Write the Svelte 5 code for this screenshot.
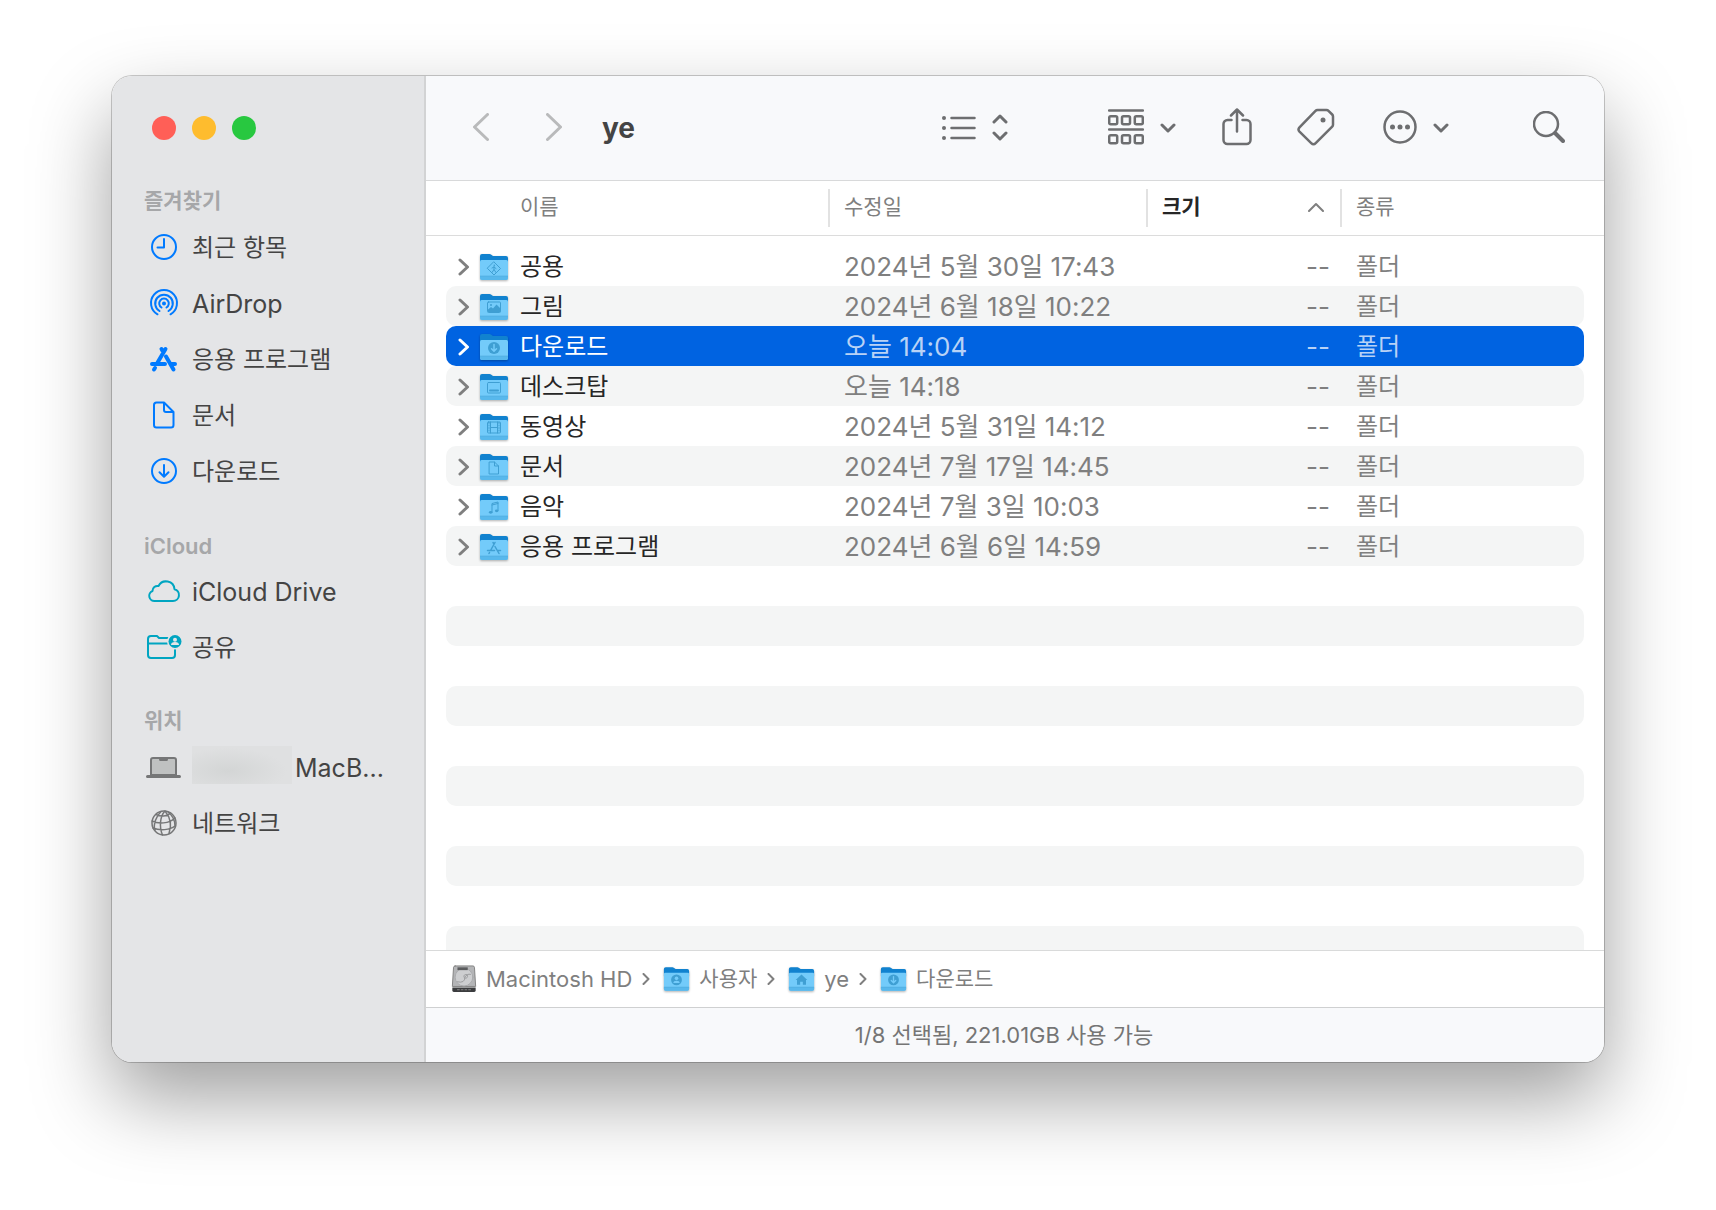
<script lang="ts">
	type Place = { icon: string; label: string; masked?: boolean };
	type Section = { title: string; tone: string; places: Place[] };
	type Folder = { name: string; glyph: string; modified: string };

	const sections: Section[] = [
		{
			title: '즐겨찾기',
			tone: 'blue',
			places: [
				{ icon: 'clock', label: '최근 항목' },
				{ icon: 'airdrop', label: 'AirDrop' },
				{ icon: 'apps', label: '응용 프로그램' },
				{ icon: 'document', label: '문서' },
				{ icon: 'download', label: '다운로드' }
			]
		},
		{
			title: 'iCloud',
			tone: 'teal',
			places: [
				{ icon: 'cloud', label: 'iCloud Drive' },
				{ icon: 'shared', label: '공유' }
			]
		},
		{
			title: '위치',
			tone: 'gray',
			places: [
				{ icon: 'laptop', label: 'MacB...', masked: true },
				{ icon: 'globe', label: '네트워크' }
			]
		}
	];

	const folders: Folder[] = [
		{ name: '공용', glyph: 'public', modified: '2024년 5월 30일 17:43' },
		{ name: '그림', glyph: 'picture', modified: '2024년 6월 18일 10:22' },
		{ name: '다운로드', glyph: 'download', modified: '오늘 14:04' },
		{ name: '데스크탑', glyph: 'desktop', modified: '오늘 14:18' },
		{ name: '동영상', glyph: 'movie', modified: '2024년 5월 31일 14:12' },
		{ name: '문서', glyph: 'document', modified: '2024년 7월 17일 14:45' },
		{ name: '음악', glyph: 'music', modified: '2024년 7월 3일 10:03' },
		{ name: '응용 프로그램', glyph: 'apps', modified: '2024년 6월 6일 14:59' }
	];

	const path = [
		{ label: 'Macintosh HD', glyph: 'disk' },
		{ label: '사용자', glyph: 'user' },
		{ label: 'ye', glyph: 'home' },
		{ label: '다운로드', glyph: 'download' }
	];

	// empty striped rows that fill the list below the last folder
	const blanks = Array.from({ length: 30 }, (_, i) => i);

	let selected = $state('다운로드');

	// latin labels run a size larger than hangul ones
	const isLatin = (text: string) => /^[\x20-\x7e]+$/.test(text);
</script>

{#snippet placeIcon(name: string)}
	<svg class="place-icon" viewBox="0 0 36 36" width="36" height="36" aria-hidden="true">
		{#if name === 'clock'}
			<circle cx="18" cy="18" r="12" />
			<path d="M18 10v8.500h-6.500" />
		{:else if name === 'airdrop'}
			<circle class="solid" cx="18" cy="18.500" r="2" />
			<path d="M15.500 22.500a4.800 4.800 0 1 1 5 0M13.500 26a8.800 8.800 0 1 1 9 0M11.500 29.300a13 13 0 1 1 13 0" />
		{:else if name === 'apps'}
			<path class="thick" d="M15.500 8l2 3.500M19.500 8l-8.500 14.500M6 23h13M25 23h4M20 15.500l7.500 13M9 27l-1 1.500" />
		{:else if name === 'document'}
			<path d="M10.500 5.500h7.500l9.500 9.500v13a2.500 2.500 0 0 1-2.500 2.500h-14.500a2.500 2.500 0 0 1-2.500-2.500v-20a2.500 2.500 0 0 1 2.500-2.500zM18 6v7a2 2 0 0 0 2 2h7" />
		{:else if name === 'download'}
			<circle cx="18" cy="18" r="12" />
			<path d="M18 12v11.500M13.500 19.200l4.500 4.500 4.500-4.500" />
		{:else if name === 'cloud'}
			<path d="M9 28h18a6 6 0 0 0 1.500-11.800a8.500 8.500 0 0 0-16-3.200a5 5 0 0 0-6 5a5.200 5.200 0 0 0 2.500 10z" />
		{:else if name === 'shared'}
			<path d="M2 14.500h21M22 9h-9l-2-2h-6a3 3 0 0 0-3 3v16a3 3 0 0 0 3 3h21a3 3 0 0 0 3-3v-6" />
			<circle class="cutout" cx="29" cy="12.500" r="8" />
			<circle class="solid" cx="29" cy="12.500" r="6.500" />
			<circle class="cutout" cx="29" cy="10.700" r="2" />
			<path class="cutout" d="M25 16a4 3 0 0 1 8 0z" />
		{:else if name === 'laptop'}
			<path class="screen" d="M5 26v-15a2 2 0 0 1 2-2h21a2 2 0 0 1 2 2v15z" />
			<path d="M1.500 27.500h32M14.500 10.500h6" stroke-width="3" />
		{:else if name === 'globe'}
			<g stroke-width="1.500">
				<circle cx="18" cy="18" r="12" />
				<path d="M19 6c-5 5-6 16-2.500 24M19 6c5 6 7 14 4 22.500M15 6.500c-5 5-8 13-6 18.500M22 7c4 3 7 8 7 14M6 16c6 3 17 3 23-3M7 23c7 3 17 2 22-2M10 9.500c5 2.500 11 2 14-1" />
			</g>
		{/if}
	</svg>
{/snippet}

{#snippet folderIcon(glyph: string)}
	<svg class="folder-icon" viewBox="0 0 30 28" aria-hidden="true">
		<path fill="#1182cf" d="M1 3a2 2 0 0 1 2-2h7.500q1 0 1.800.7l1.700 1.300h13a2 2 0 0 1 2 2v6h-28z" />
		<path fill="#73cbfa" d="M1 8.500q0-1.500 1.500-1.500h25q1.500 0 1.500 1.500v16.500a2 2 0 0 1-2 2h-24a2 2 0 0 1-2-2z" />
		<path fill="#58b8ec" d="M1 23h28v2a2 2 0 0 1-2 2h-24a2 2 0 0 1-2-2z" />
		<path fill="#4aa5d8" d="M1 22.500h28v1h-28z" opacity=".5" />
		<g class="glyph">
			{#if glyph === 'public'}
				<path d="M15 9l6.500 6.500-6.500 6.500-6.500-6.500zM15 13.500v3l-2 3M15 16.500l2 3M13 15l2-1 2 1.500" />
				<circle class="ink" cx="15.300" cy="12.300" r=".8" />
			{:else if glyph === 'picture'}
				<rect x="8.500" y="9" width="13" height="10.500" rx="1" />
				<path class="ink" d="M9 19v-2.500l3-2.500 2 1.500 3.500-4 4 4v3.500z" />
				<circle class="ink" cx="12" cy="12" r="1" />
			{:else if glyph === 'download'}
				<circle class="ink" cx="15" cy="15" r="6" />
				<path class="light" d="M15 11.500v6.500M12.500 15.700l2.500 2.500 2.500-2.500" />
			{:else if glyph === 'desktop'}
				<rect x="8.500" y="9.500" width="13" height="10.500" rx="1" />
				<path stroke-width="2" d="M11 17.500h8" />
			{:else if glyph === 'movie'}
				<rect x="8.500" y="9" width="13" height="11" rx="1" />
				<path d="M11.500 9v11M18.500 9v11M11.500 14.500h7" />
				<path stroke-dasharray="1 1.500" d="M10 9.500v10M20 9.500v10" />
			{:else if glyph === 'document'}
				<path d="M10.500 9h5l4 4v8h-9zM15.500 9v4h4" />
			{:else if glyph === 'music'}
				<path d="M13 19v-8.500l6-1.500v8.500M13 12l6-1.500" />
				<ellipse class="ink" cx="11.700" cy="19.300" rx="1.800" ry="1.400" />
				<ellipse class="ink" cx="17.700" cy="17.800" rx="1.800" ry="1.400" />
			{:else if glyph === 'apps'}
				<path stroke-width="1.500" d="M14 9.500l1 1.500M16 9.500l-4.500 8M8.500 17.500h7M19 17.500h2.500M16 13.500l4 7M10.500 19.500l-.5 1" />
			{:else if glyph === 'user'}
				<circle class="ink" cx="15" cy="15" r="6" />
				<circle class="paper" cx="15" cy="13.300" r="2" />
				<path class="paper" d="M11.500 18.500a3.500 2.500 0 0 1 7 0z" />
			{:else if glyph === 'home'}
				<path class="ink" d="M15 9l6.500 6h-1.500v5.500h-3.500v-3.500h-3v3.500h-3.500v-5.500h-1.500z" />
			{/if}
		</g>
	</svg>
{/snippet}

{#snippet diskIcon()}
	<svg class="disk-icon" viewBox="0 0 26 30" aria-hidden="true">
		<path fill="#b4b5b7" d="M3.500 1h19q1.500 0 1.700 1.500l1.300 20.500h-25l1.300-20.500q.2-1.500 1.700-1.500z" />
		<ellipse cx="13" cy="13" rx="9.500" ry="9.500" fill="#cdced0" stroke="#a8a9ab" />
		<path d="M6 18q8 2 8-5q2-4 6-3M13 13a2 2 0 1 1 1 1" fill="none" stroke="#98999b" />
		<rect x="6" y="2.500" width="11" height="3" fill="#5b5c5e" stroke="none" />
		<path fill="#3b3c3e" stroke="none" d="M.5 24h25v3a2 2 0 0 1-2 2h-21a2 2 0 0 1-2-2z" />
		<path stroke="#888" stroke-dasharray="2 2" d="M6 26.500h14" />
	</svg>
{/snippet}

{#snippet chevronDown()}
	<svg viewBox="0 0 16 12" width="16" height="12" aria-hidden="true">
		<path stroke-width="3" d="M2 4l6 6 6-6" />
	</svg>
{/snippet}

<div class="desktop">
	<div class="window">
		<aside class="sidebar">
			<div class="lights">
				<button class="light-close" aria-label="닫기"></button>
				<button class="light-min" aria-label="최소화"></button>
				<button class="light-zoom" aria-label="확대"></button>
			</div>
			{#each sections as section}
				<nav class="section {section.tone}" aria-label={section.title}>
					<h2 class:latin={isLatin(section.title)}>{section.title}</h2>
					{#each section.places as place}
						<a class="place" href="#{place.icon}">
							{@render placeIcon(place.icon)}
							{#if place.masked}<i class="mask"></i>{/if}
							<span class:latin={isLatin(place.label)}>{place.label}</span>
						</a>
					{/each}
				</nav>
			{/each}
		</aside>

		<main class="browser">
			<header class="toolbar">
				<div class="history">
					<button aria-label="뒤로">
						<svg viewBox="0 0 16 28" width="16" height="28"><path stroke-width="3" d="M14.500 1.500l-13 12.500 13 12.500" /></svg>
					</button>
					<button aria-label="앞으로">
						<svg viewBox="0 0 16 28" width="16" height="28"><path stroke-width="3" d="M1.500 1.500l13 12.500-13 12.500" /></svg>
					</button>
				</div>
				<h1>ye</h1>
				<button class="tool view" aria-label="보기">
					<svg viewBox="0 0 34 28" width="34" height="28">
						<path d="M9.500 5h23M9.500 15h23M9.500 25h23" />
						<g class="solid"><circle cx="2" cy="5" r="2" /><circle cx="2" cy="15" r="2" /><circle cx="2" cy="25" r="2" /></g>
					</svg>
					<svg viewBox="0 0 16 28" width="16" height="28"><path stroke-width="3" d="M2 9l6-6 6 6M2 20l6 6 6-6" /></svg>
				</button>
				<button class="tool group" aria-label="그룹">
					<svg viewBox="0 0 36 36" width="36" height="36">
						<path d="M1 1.500h34M1 20.500h34" />
						{#each [1.2, 14, 26.8] as x}
							<rect {x} y="7.200" width="8" height="8" rx="1.500" />
							<rect {x} y="26.200" width="8" height="8" rx="1.500" />
						{/each}
					</svg>
					{@render chevronDown()}
				</button>
				<button class="tool" aria-label="공유">
					<svg viewBox="0 0 30 38" width="30" height="38">
						<path d="M9.500 12h-4a4 4 0 0 0-4 4v16a4 4 0 0 0 4 4h19a4 4 0 0 0 4-4v-16a4 4 0 0 0-4-4h-4M15 23.500v-22M9 7.500l6-6 6 6" />
					</svg>
				</button>
				<button class="tool tag" aria-label="태그">
					<svg viewBox="0 0 38 38" width="38" height="38">
						<path d="M20.500 2h9q1.200 0 2 .8l3.700 3.700q.8.8.8 2v8.200q0 1.200-.8 2l-16.500 16.500q-2.200 2.200-4.500 0l-11.700-11.500q-2-2.200 0-4.300l16-16.600q.8-.8 2-.8z" />
						<circle class="solid" cx="26" cy="12" r="2.500" />
					</svg>
				</button>
				<button class="tool more" aria-label="더 보기">
					<svg viewBox="0 0 34 34" width="34" height="34">
						<circle cx="17" cy="17" r="15.500" />
						<g class="solid"><circle cx="9.500" cy="17" r="2.500" /><circle cx="17" cy="17" r="2.500" /><circle cx="24.500" cy="17" r="2.500" /></g>
					</svg>
					{@render chevronDown()}
				</button>
				<button class="tool search" aria-label="검색">
					<svg viewBox="0 0 32 32" width="32" height="32">
						<circle cx="13" cy="13" r="12" />
						<path stroke-width="4" d="M22.500 22.500l7.500 7.500" />
					</svg>
				</button>
			</header>

			<div class="list">
				<table>
					<colgroup>
						<col class="col-name" />
						<col class="col-date" />
						<col class="col-size" />
						<col />
					</colgroup>
					<thead>
						<tr>
							<th><button class="head-name">이름</button></th>
							<th><button>수정일</button></th>
							<th aria-sort="ascending">
								<button class="sorted">
									크기
									<svg viewBox="0 0 16 10" width="16" height="10" aria-hidden="true"><path d="M1 9l7-7 7 7" /></svg>
								</button>
							</th>
							<th><button>종류</button></th>
						</tr>
					</thead>
					<tbody>
						{#each folders as folder}
							<tr class:selected={selected === folder.name} onclick={() => (selected = folder.name)}>
								<td>
									<div class="name">
										<button class="expand" aria-label="{folder.name} 펼치기">
											<svg viewBox="0 0 12 18" width="12" height="18"><path stroke-width="3" d="M2 2l7.500 7-7.500 7" /></svg>
										</button>
										{@render folderIcon(folder.glyph)}
										<span>{folder.name}</span>
									</div>
								</td>
								<td class="date">{folder.modified}</td>
								<td class="size">--</td>
								<td>폴더</td>
							</tr>
						{/each}
					</tbody>
				</table>
				<div class="blanks" aria-hidden="true">
					{#each blanks as n (n)}
						<div class="blank"></div>
					{/each}
				</div>
			</div>

			<nav class="pathbar" aria-label="경로">
				{#each path as step, i}
					{#if i > 0}
						<svg class="sep" viewBox="0 0 8 12" width="8" height="12" aria-hidden="true"><path d="M1.500 1l5 5-5 5" /></svg>
					{/if}
					<a href="#path-{i}">
						{#if step.glyph === 'disk'}
							{@render diskIcon()}
						{:else}
							{@render folderIcon(step.glyph)}
						{/if}
						<span class:latin={isLatin(step.label)}>{step.label}</span>
					</a>
				{/each}
			</nav>

			<footer class="status">1/8 선택됨, 221.01GB 사용 가능</footer>
		</main>
	</div>
</div>

<style>
	:global(body) {
		background: #fff;
	}

	.desktop {
		display: flex;
		height: 100vh;
		padding: 76px 112px 148px;
		box-sizing: border-box;
		overflow: hidden;
		font-family: Inter, "Noto Sans CJK KR", sans-serif;
		font-size: 24px;
		line-height: 32px;
		color: #444;
	}

	.window {
		display: flex;
		flex: 1;
		min-width: 0;
		border-radius: 20px;
		background: #fff;
		box-shadow:
			0 0 0 1px rgba(0, 0, 0, 0.2),
			0 36px 80px rgba(0, 0, 0, 0.38);
	}

	button {
		padding: 0;
		border: none;
		background: none;
		font: inherit;
		color: inherit;
	}

	a {
		color: inherit;
		text-decoration: none;
	}

	svg {
		display: block;
		flex: none;
		fill: none;
		stroke: currentColor;
		stroke-width: 2;
		stroke-linecap: round;
		stroke-linejoin: round;
	}

	.solid {
		fill: currentColor;
		stroke: none;
	}

	/* sidebar */
	.sidebar {
		flex: none;
		width: 314px;
		box-sizing: border-box;
		border-right: 2px solid #d2d3d4;
		border-radius: 20px 0 0 20px;
		background: #e4e5e7;
	}

	.lights {
		display: flex;
		gap: 16px;
		padding: 40px 40px 43px;
	}

	.lights button {
		width: 24px;
		height: 24px;
		border-radius: 50%;
	}

	.light-close {
		background: #ff5f57;
	}

	.light-min {
		background: #febc2e;
	}

	.light-zoom {
		background: #28c840;
	}

	.section {
		margin-bottom: 28px;
	}

	h2 {
		margin: 0;
		padding-left: 32px;
		font-size: 21px;
		font-weight: 600;
		line-height: 36px;
		color: #a6a7a9;
	}

	h2.latin {
		font-size: 22px;
		line-height: 38px;
		margin-bottom: -2px;
	}

	.place {
		display: flex;
		align-items: center;
		height: 56px;
		padding-left: 34px;
		white-space: nowrap;
	}

	.place span {
		padding-top: 2px;
	}

	.place .latin {
		font-size: 25px;
	}

	.place-icon {
		margin-right: 10px;
	}

	.blue .place-icon {
		color: #007aff;
	}

	.teal .place-icon {
		color: #00a5c1;
	}

	.gray .place-icon {
		color: #757677;
	}

	.thick {
		stroke-width: 4;
	}

	.cutout {
		fill: #e4e5e7;
		stroke: none;
	}

	.screen {
		fill: #bfc1c1;
	}

	.mask {
		width: 100px;
		height: 38px;
		margin: 0 3px 4px 0;
		background: radial-gradient(ellipse at 36% 65%, #d3d5d5, #dfe0e1 65%);
	}

	/* toolbar */
	.browser {
		display: flex;
		flex-direction: column;
		flex: 1;
		min-width: 0;
	}

	.toolbar {
		display: flex;
		align-items: center;
		flex: none;
		height: 105px;
		padding: 0 39px 2px 47px;
		box-sizing: border-box;
		border-bottom: 1px solid #d8d9da;
		border-radius: 0 20px 0 0;
		background: #f8f9fb;
		color: #6d6e70;
	}

	.history {
		display: flex;
		gap: 57px;
		margin-right: 40px;
		color: #b9babb;
	}

	h1 {
		flex: 1;
		margin: 0;
		padding-top: 2px;
		font-size: 28px;
		font-weight: 700;
		line-height: 36px;
		color: #444;
	}

	.tool {
		display: flex;
		align-items: center;
		gap: 16px;
		margin-left: 46px;
	}

	.tool svg {
		stroke-width: 2.5;
	}

	.view {
		margin: 0;
	}

	.group {
		margin-left: 100px;
	}

	.tag {
		margin-left: 45px;
	}

	.more {
		margin-left: 48px;
	}

	.search {
		margin-left: 84px;
	}

	/* list: the rule under the column heads runs the full width */
	.list {
		flex: 1;
		min-height: 0;
		padding: 0 20px;
		overflow: hidden;
		background: linear-gradient(#dcdcdc, #dcdcdc) 0 54px / 100% 1px no-repeat;
	}

	table {
		width: 100%;
		table-layout: fixed;
		border-spacing: 0;
	}

	.col-name {
		width: 382px;
	}

	.col-date {
		width: 318px;
	}

	.col-size {
		width: 194px;
	}

	th {
		height: 54px;
		padding: 0;
		font-size: 21px;
		font-weight: 400;
		color: #7f7f7f;
	}

	th button {
		display: flex;
		align-items: center;
		justify-content: space-between;
		width: 100%;
		height: 38px;
		padding: 0 16px 2px 14px;
		border-left: 2px solid #e2e2e2;
	}

	th .head-name {
		padding-left: 74px;
		border: none;
	}

	th .sorted {
		font-weight: 600;
		color: #262626;
	}

	.sorted svg {
		color: #7f7f7f;
	}

	tbody::before {
		content: '';
		display: block;
		height: 11px;
	}

	td {
		height: 40px;
		padding: 2px 10px 0 16px;
		box-sizing: border-box;
		color: #7f7f7f;
		white-space: nowrap;
	}

	td:first-child {
		border-radius: 10px 0 0 10px;
		padding-left: 0;
		color: #262626;
	}

	td:last-child {
		border-radius: 0 10px 10px 0;
	}

	.date {
		font-size: 26px;
	}

	.size {
		font-size: 26px;
		text-align: right;
	}

	tbody tr:nth-child(even) td {
		background: #f4f5f5;
	}

	tbody tr.selected td {
		background: #0063e1;
		color: #b8d2f6;
	}

	tbody tr.selected td:first-child {
		color: #fff;
	}

	.name {
		display: flex;
		align-items: center;
	}

	.expand {
		margin: 0 9px 0 12px;
		color: #7f7f7f;
	}

	.selected .expand {
		color: #fff;
	}

	.name .folder-icon {
		width: 30px;
		height: 28px;
		margin-right: 11px;
	}

	.folder-icon {
		stroke: none;
		filter: drop-shadow(0 1px 1px rgba(0, 0, 0, 0.3));
	}

	.glyph {
		stroke: #3f9fd3;
		stroke-width: 1;
	}

	.glyph .ink {
		fill: #3f9fd3;
		stroke: none;
	}

	.glyph .light {
		stroke: #73cbfa;
		stroke-width: 1.5;
	}

	.glyph .paper {
		fill: #73cbfa;
		stroke: none;
	}

	.blank {
		height: 40px;
		border-radius: 10px;
	}

	.blank:nth-child(even) {
		background: #f4f5f5;
	}

	/* path bar and status */
	.pathbar {
		display: flex;
		align-items: center;
		flex: none;
		height: 57px;
		padding-left: 25px;
		box-sizing: border-box;
		border-top: 1px solid #d9dada;
		font-size: 21px;
		color: #7f7f7f;
		white-space: nowrap;
	}

	.pathbar a {
		display: flex;
		align-items: center;
		gap: 9px;
	}

	.pathbar .latin {
		font-size: 22px;
	}

	.pathbar .folder-icon {
		width: 27px;
		height: 26px;
	}

	.disk-icon {
		width: 26px;
		height: 28px;
		stroke-width: 1;
	}

	.sep {
		margin: 0 13px 0 10px;
	}

	.status {
		flex: none;
		height: 55px;
		padding-right: 22px;
		box-sizing: border-box;
		border-top: 1px solid #cfd0d1;
		border-radius: 0 0 20px 0;
		background: #f8f9fb;
		font-size: 22px;
		line-height: 54px;
		text-align: center;
		color: #757575;
	}
</style>
